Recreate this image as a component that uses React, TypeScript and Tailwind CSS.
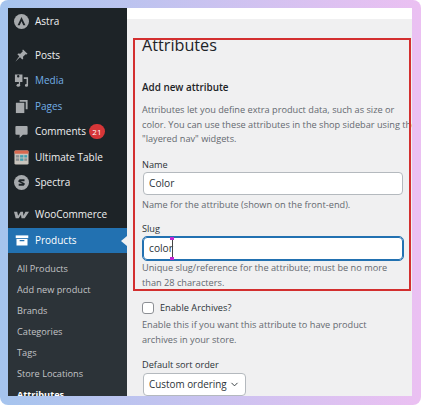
import React from 'react';
import { ChevronDown } from 'lucide-react';

const iconGray = '#a7aaad';

const AstraIcon = () => (
  <svg viewBox="0 0 16 16" className="w-[15px] h-[15px]">
    <circle cx="8" cy="8" r="8" fill={iconGray} />
    <path d="M8 3.2 L12.2 12 H9.9 L8 7.8 L6.1 12 H3.8 Z" fill="#1d2327" />
  </svg>
);

const PostsIcon = () => (
  <svg viewBox="0 0 16 16" className="w-[15px] h-[15px]">
    <path d="M9.6 1.6 L14.4 6.2 L13.4 7 L12.4 6.6 L9.6 9.2 L9.8 11.4 L8.8 12.2 L6.4 9.8 L1.4 14.6 L5.6 8.8 L3.6 6.6 L4.6 5.8 L6.8 6 L9.4 3.4 L8.9 2.3 Z" fill={iconGray} />
  </svg>
);

const MediaIcon = () => (
  <svg viewBox="0 0 16 16" className="w-[15px] h-[15px]">
    <path d="M1 1.5 H9 V9.5 H1 Z M3.2 3.4 A1.3 1.3 0 1 0 5.8 3.4 A1.3 1.3 0 1 0 3.2 3.4 Z" fill={iconGray} fillRule="evenodd" />
    <path d="M10.5 4.5 H15 V13.2 A1.7 1.5 0 1 1 13.4 11.8 V6.4 H10.5 Z" fill={iconGray} />
    <ellipse cx="4.6" cy="13" rx="1.9" ry="1.6" fill={iconGray} />
    <rect x="5.2" y="9.5" width="1.3" height="3.5" fill={iconGray} />
  </svg>
);

const PagesIcon = () => (
  <svg viewBox="0 0 16 16" className="w-[15px] h-[15px]">
    <path d="M6 1 H14.5 V11 H12.5 V3 H6 Z" fill={iconGray} />
    <path d="M2 4 H11 V15 H2 Z" fill={iconGray} />
  </svg>
);

const CommentsIcon = () => (
  <svg viewBox="0 0 16 16" className="w-[15px] h-[15px]">
    <path d="M2.5 2 H13.5 A1 1 0 0 1 14.5 3 V10.5 A1 1 0 0 1 13.5 11.5 H9.5 L6 15 V11.5 H2.5 A1 1 0 0 1 1.5 10.5 V3 A1 1 0 0 1 2.5 2 Z" fill={iconGray} />
  </svg>
);

const TableIcon = () => (
  <svg viewBox="0 0 16 16" className="w-[15px] h-[15px]">
    <rect x="0.5" y="0.5" width="15" height="15" rx="1.5" fill="#c9c4bd" />
    <rect x="0.5" y="0.5" width="15" height="3.5" rx="1" fill="#d9694f" />
    <rect x="2" y="5.5" width="3.5" height="2.5" fill="#8a8f92" />
    <rect x="6.5" y="5.5" width="3.5" height="2.5" fill="#3f9fb0" />
    <rect x="11" y="5.5" width="3" height="2.5" fill="#3f9fb0" />
    <rect x="2" y="9" width="3.5" height="2.5" fill="#8a8f92" />
    <rect x="6.5" y="9" width="3.5" height="2.5" fill="#3f9fb0" />
    <rect x="11" y="9" width="3" height="2.5" fill="#8a8f92" />
  </svg>
);

const SpectraIcon = () => (
  <svg viewBox="0 0 16 16" className="w-[15px] h-[15px]">
    <circle cx="8" cy="8" r="8" fill={iconGray} />
    <path d="M11.2 4.6 L6 4.6 L4.6 6 L4.6 7.2 L9 9.4 L5 9.4 L5 11.4 L10.2 11.4 L11.4 10 L11.4 8.8 L7 6.6 L11.2 6.6 Z" fill="#1d2327" />
  </svg>
);

const WooIcon = () => (
  <svg viewBox="0 0 16 12" preserveAspectRatio="none" className="w-[15px] h-[8px]">
    <path d="M0 1 H3.4 L4.4 7 L7 1 H9.6 L10 7 L12.2 1 H16 L11.4 11 H8 L7.4 5.6 L5 11 H1.8 Z" fill={iconGray} />
  </svg>
);

const ProductsIcon = () => (
  <svg viewBox="0 0 16 14" className="w-[14px] h-[11px]">
    <path d="M0 0.5 H16 V4 H0 Z" fill="#fff" />
    <path d="M1 5 H15 V13.5 H1 Z M5 6.5 V8 H11 V6.5 Z" fill="#fff" fillRule="evenodd" />
  </svg>
);

const menuItems = [
  { label: 'Posts', icon: <PostsIcon />, h: 'h-[26px]' },
  { label: 'Media', icon: <MediaIcon />, h: 'h-[25px]', active: true },
  { label: 'Pages', icon: <PagesIcon />, h: 'h-[26px]', active: true },
  { label: 'Comments', icon: <CommentsIcon />, h: 'h-[25px]', badge: '21' },
  { label: 'Ultimate Table', icon: <TableIcon />, h: 'h-[26px]' },
  { label: 'Spectra', icon: <SpectraIcon />, h: 'h-[25px]' },
];

const subItems = ['All Products', 'Add new product', 'Brands', 'Categories', 'Tags', 'Store Locations'];

const App: React.FC = () => {
  return (
    <div className="w-[421px] h-[405px] overflow-hidden bg-white font-['Open_Sans',sans-serif]">
      <div className="w-full h-full rounded-[8px] bg-gradient-to-r from-[#a5c4ee] to-[#ebc0f2] p-[8px]">
        <div className="relative w-[404px] h-[388px] flex overflow-hidden">
          <aside className="w-[119px] h-full bg-[#1d2327] text-[10px] text-[#f0f0f1] shrink-0">
            <div className="h-[26px] flex items-center gap-[6px] pl-[6px]">
              <AstraIcon />
              <span>Astra</span>
            </div>
            <div className="mt-[8px]">
              {menuItems.map(item => (
                <div key={item.label} className={`${item.h} flex items-center gap-[6px] pl-[6px]`}>
                  {item.icon}
                  <span className={item.active ? 'text-[#72aee6]' : ''}>{item.label}</span>
                  {item.badge && (
                    <span className="-ml-[3px] w-[16px] h-[15px] rounded-full bg-[#d63638] text-white text-[8px] flex items-center justify-center">{item.badge}</span>
                  )}
                </div>
              ))}
            </div>
            <div className="h-[25px] mt-[7px] flex items-center gap-[6px] pl-[6px]">
              <WooIcon />
              <span>WooCommerce</span>
            </div>
            <div className="relative h-[25px] mt-[1px] bg-[#2271b1] text-white flex items-center gap-[6px] pl-[7px]">
              <ProductsIcon />
              <span>Products</span>
              <div className="absolute right-0 top-[8px] w-0 h-0 border-y-[5px] border-y-transparent border-r-[6px] border-r-[#f0f0f1]" />
            </div>
            <div className="bg-[#2c3338] h-[200px] pt-[5px] text-[9.2px] text-[#c3c4c7]">
              {subItems.map(s => (
                <div key={s} className="h-[21px] flex items-center pl-[9px]">{s}</div>
              ))}
              <div className="h-[21px] flex items-center pl-[9px] font-bold text-white">Attributes</div>
            </div>
          </aside>

          <main className="flex-1 min-w-0 bg-[#f0f0f1] overflow-hidden">
            <div className="h-[11px] bg-white" />
            <div className="pl-[15px] pr-[9px] text-[9.2px] leading-[14.5px] text-[#646970]">
              <h1 className="mt-[15px] text-[16.2px] leading-[23px] text-[#1d2327]">Attributes</h1>
              <h2 className="mt-[22px] text-[9.9px] leading-[16px] font-semibold text-[#1d2327]">Add new attribute</h2>
              <p className="mt-[8px] w-[300px] leading-[14.5px]">Attributes let you define extra product data, such as size or<br />color. You can use these attributes in the shop sidebar using the<br />"layered nav" widgets.</p>

              <label className="block mt-[11px] text-[#2c3338]">Name</label>
              <div className="ml-[1px] h-[23px] rounded-[4px] border border-[#b4b9be] bg-white flex items-center pl-[5px] text-[10.2px] text-[#2c3338]">Color</div>
              <p className="mt-[3px]">Name for the attribute (shown on the front-end).</p>

              <label className="block mt-[9px] text-[#2c3338]">Slug</label>
              <div className="relative mt-[1px] ml-[1px] h-[23px] rounded-[4px] border border-[#2271b1] outline outline-1 outline-[#2271b1] bg-white flex items-center pl-[5px] text-[10.2px] text-[#2c3338]">
                color
                <div className="absolute left-[28px] -top-[1px] w-[1px] h-[23px] bg-[#444]" />
                <div className="absolute left-[26px] -top-[1px] w-[4px] h-[3px] bg-[#c026d3]" />
                <div className="absolute left-[26px] -bottom-[1px] w-[4px] h-[3px] bg-[#c026d3]" />
              </div>
              <p className="mt-[1px] w-[262px]">Unique slug/reference for the attribute; must be no more<br />than 28 characters.</p>

              <div className="mt-[11px] flex items-center gap-[6px] h-[14px] text-[#2c3338]">
                <span className="w-[12px] h-[12px] rounded-[3px] border border-[#8c8f94] bg-white" />
                <span>Enable Archives?</span>
              </div>
              <p className="mt-[3px] w-[262px]">Enable this if you want this attribute to have product<br />archives in your store.</p>

              <label className="block mt-[11px] text-[#2c3338]">Default sort order</label>
              <div className="ml-[1px] w-[103px] h-[23px] rounded-[4px] border border-[#b4b9be] bg-white flex items-center justify-between pl-[5px] pr-[5px] text-[9.9px] text-[#2c3338] whitespace-nowrap">
                Custom ordering
                <ChevronDown className="w-[11px] h-[11px]" strokeWidth={2} />
              </div>
            </div>
          </main>

          <div className="absolute left-[125px] top-[30px] w-[278px] h-[253px] border-2 border-[#d32f2f] pointer-events-none" />
        </div>
      </div>
    </div>
  );
};

export default App;
